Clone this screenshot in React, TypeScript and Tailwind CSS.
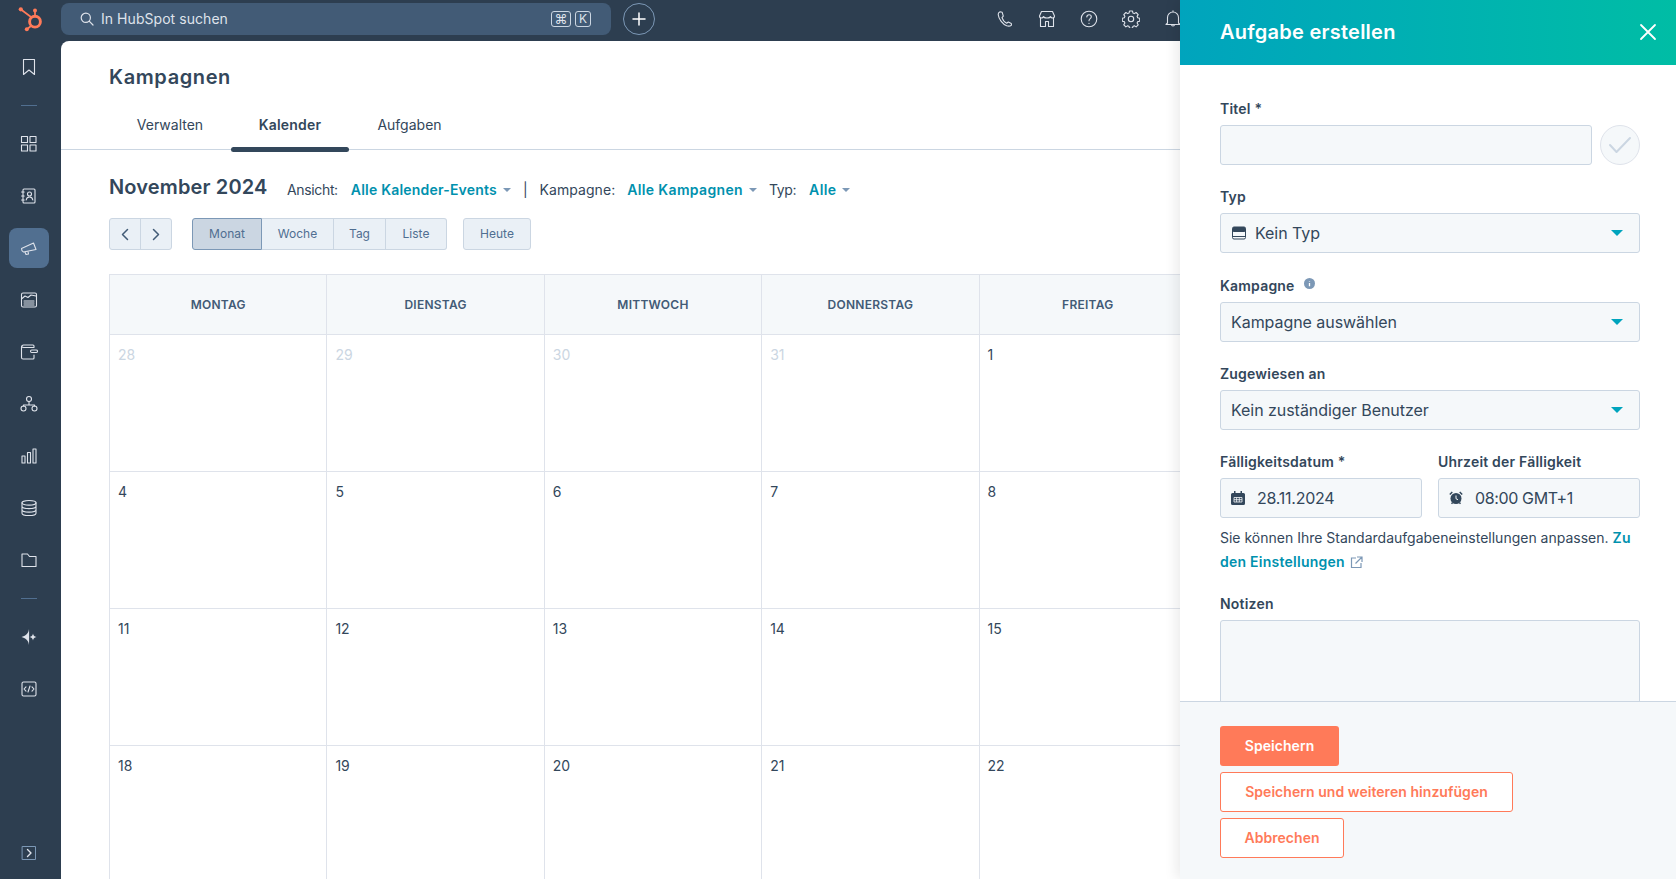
import React from "react";

type IconProps = { w: number; h: number; vb?: string; className?: string; sw?: number; children: React.ReactNode };
function Ic({ w, h, vb, className, sw = 1.1, children }: IconProps) {
  return (
    <svg width={w} height={h} viewBox={vb ?? `0 0 ${w} ${h}`} fill="none" stroke="currentColor" strokeWidth={sw} strokeLinecap="round" strokeLinejoin="round" className={className}>
      {children}
    </svg>
  );
}

const Logo = () => (
  <svg width="61" height="41" viewBox="0 0 61 41" fill="none" className="shrink-0">
    <circle cx="35" cy="21.7" r="5.4" stroke="#ff7a59" strokeWidth="2.9" />
    <path d="M35 16V10.5M21 9.5L31 17M31 26L26.5 29.5" stroke="#ff7a59" strokeWidth="1.7" />
    <circle cx="35" cy="10.5" r="2" fill="#ff7a59" />
    <circle cx="20.8" cy="9.3" r="2.1" fill="#ff7a59" />
    <circle cx="26.8" cy="29.2" r="2" fill="#ff7a59" />
  </svg>
);

const side = {
  bookmark: <Ic w={18} h={18}><path d="M3.5 1.5h11v15l-5.5-4.5-5.5 4.5z" /></Ic>,
  grid: (
    <Ic w={18} h={18}>
      <rect x="1.5" y="1.5" width="6" height="6" /><rect x="10" y="1.5" width="6" height="6" />
      <rect x="1.5" y="10" width="6" height="6" /><rect x="10" y="10" width="6" height="6" />
    </Ic>
  ),
  contacts: (
    <Ic w={18} h={18}>
      <rect x="3" y="2" width="12" height="14" rx="1" />
      <circle cx="9.5" cy="7" r="2" />
      <path d="M6.2 13c.3-2 1.6-3 3.3-3s3 1 3.3 3M1.6 5h2.6M1.6 9h2.6M1.6 13h2.6" />
    </Ic>
  ),
  megaphone: (
    <Ic w={18} h={18}>
      <path d="M1.500 9.500l12-5.500 2.500 6.500-12.500 2.500c-1.500-.5-2-2.500-2-3.500zM5 13l1 2.500 2.500-.5-.5-2.700" />
    </Ic>
  ),
  reports: (
    <Ic w={18} h={18}>
      <rect x="1.500" y="2" width="15" height="14" rx="1.500" />
      <path d="M2 7.500l3-2.500 3 1.500 3-2.500 5 1M4 10h10M4 12h10M4 14h10" />
    </Ic>
  ),
  wallet: (
    <Ic w={18} h={18}>
      <path d="M14 4V3a1 1 0 0 0-1-1H3.500A2 2 0 0 0 1.500 4v10.500a1.500 1.500 0 0 0 1.500 1.500h10a1 1 0 0 0 1-1v-3M1.800 3.500c.3 1 1 1 2 1H14" />
      <rect x="10.500" y="7" width="7" height="2.500" rx="1.200" />
    </Ic>
  ),
  network: (
    <Ic w={18} h={18}>
      <circle cx="9" cy="4" r="2.500" /><circle cx="3.500" cy="13.500" r="2.500" /><circle cx="14.500" cy="13.500" r="2.500" />
      <path d="M9 6.500V10M3.500 11V10h11v1" />
    </Ic>
  ),
  bars: (
    <Ic w={18} h={18}>
      <rect x="2" y="9" width="3" height="7" /><rect x="7.500" y="5.500" width="3" height="10.500" /><rect x="13" y="2" width="3" height="14" />
    </Ic>
  ),
  database: (
    <Ic w={18} h={18}>
      <ellipse cx="9" cy="3.800" rx="7" ry="2.300" />
      <path d="M2 3.800v10.400c0 1.300 3.100 2.300 7 2.300s7-1 7-2.300V3.800M2 7.300c0 1.300 3.100 2.300 7 2.300s7-1 7-2.300M2 10.800c0 1.300 3.100 2.300 7 2.300s7-1 7-2.300" />
    </Ic>
  ),
  folder: <Ic w={18} h={18}><path d="M2 3h5.500l2 2.500H16v10H2z" /></Ic>,
  sparkle: (
    <svg width="18" height="18" viewBox="0 0 18 18" fill="#dfe3eb">
      <path d="M9 1c.2 4 .2 12 0 16-.5-3.500-1.500-6-7.500-8 6-2 7-4.500 7.500-8z" />
      <path d="M13 5.500c.4 2 1 3 3.500 3.500-2.500.5-3.100 1.500-3.500 3.500-.4-2-1-3-3.500-3.500 2.500-.5 3.100-1.500 3.500-3.500z" />
    </svg>
  ),
  code: (
    <Ic w={18} h={18}>
      <rect x="2" y="2" width="14" height="14" rx="1.500" />
      <path d="M6 6.800L4 9l2 2.200M12 6.800L14 9l-2 2.200M10 6l-2 6" />
    </Ic>
  ),
};

const SideItem = ({ children, active }: { children: React.ReactNode; active?: boolean }) => (
  <div className="h-[52px] w-full flex items-center justify-center shrink-0 text-[#dfe3eb]">
    {active ? <div className="w-10 h-10 rounded-lg bg-[#516f90] flex items-center justify-center">{children}</div> : children}
  </div>
);

const SideDash = () => (
  <div className="h-[25px] flex items-center shrink-0">
    <div className="w-4 h-px bg-[#516f90]" />
  </div>
);

const Sidebar = () => (
  <aside className="w-[61px] shrink-0 pr-[3px] flex flex-col items-center">
    <SideItem>{side.bookmark}</SideItem>
    <SideDash />
    <SideItem>{side.grid}</SideItem>
    <SideItem>{side.contacts}</SideItem>
    <SideItem active>{side.megaphone}</SideItem>
    <SideItem>{side.reports}</SideItem>
    <SideItem>{side.wallet}</SideItem>
    <SideItem>{side.network}</SideItem>
    <SideItem>{side.bars}</SideItem>
    <SideItem>{side.database}</SideItem>
    <SideItem>{side.folder}</SideItem>
    <SideDash />
    <SideItem>{side.sparkle}</SideItem>
    <SideItem>{side.code}</SideItem>
    <div className="mt-auto h-[52px] flex items-center justify-center text-[#7c98b6]">
      <Ic w={16} h={16} sw={1}>
        <rect x="1.500" y="1.500" width="13" height="13" />
        <path d="M6.500 4.500L10 8l-3.500 3.500" stroke="#dfe3eb" strokeWidth="1.400" />
      </Ic>
    </div>
  </aside>
);

const TopIcons = () => (
  <div className="ml-auto h-[38px] flex items-center gap-[24px] text-[#dfe3eb] pr-[494px]">
    <Ic w={18} h={18} className="ml-[2px]"><path d="M4 1.800c-1.300.5-2 1.500-1.800 3 .6 4.500 4.500 9.500 8.500 11 1.800.6 3.500.5 4.800-.7l-.2-1.600-3-1.500-1.600 1.200c-2-.8-3.800-3.100-4.700-5.600l1.300-1.500-1.100-3.800z" /></Ic>
    <Ic w={18} h={18}><path d="M3.500 1.500h11l2 4.500c0 1.200-1 2-2 2s-1.800-.8-2-1.500c-.2.700-1.500 1.500-3.500 1.500s-3.300-.8-3.500-1.500c-.2.700-1 1.500-2 1.500s-2-.8-2-2zM2.500 8v8.500h5v-5h3v5h5V8" /></Ic>
    <Ic w={18} h={18}>
      <circle cx="9" cy="9" r="7.800" />
      <path d="M6.800 6.900c.1-1.300 1-2.100 2.300-2.100s2.200.8 2.200 2c0 1.900-2.300 1.800-2.300 3.900" />
      <path d="M9 13.200v.2" />
    </Ic>
    <Ic w={18} h={18}>
      <path d="M7.500 1h3l.4 2 1.400.6 1.800-1.100 2.100 2.100-1.100 1.800.6 1.400 2 .4v3l-2 .4-.6 1.400 1.100 1.800-2.100 2.100-1.800-1.100-1.400.6-.4 2h-3l-.4-2-1.400-.6-1.800 1.100-2.100-2.100 1.100-1.800-.6-1.400-2-.4v-3l2-.4.6-1.400-1.100-1.800 2.100-2.100 1.800 1.100 1.400-.6z" />
      <circle cx="9" cy="9" r="2.700" />
    </Ic>
    <Ic w={18} h={18}>
      <path d="M3.500 13V7.500a5.500 5.500 0 0 1 11 0V13l1.500 1.500H2zM9 2V.8M7.500 14.500c0 2 3 2 3 0" />
    </Ic>
  </div>
);

const TopBar = () => (
  <header className="h-[41px] shrink-0 flex items-start">
    <Logo />
    <div className="mt-[3px] w-[550px] h-8 rounded-lg bg-[#425b76] flex items-center pl-[19px] pr-5 text-[#dfe3eb]">
      <Ic w={14} h={14} sw={1.200}>
        <circle cx="5.800" cy="5.800" r="4.600" />
        <path d="M9.200 9.200l3.800 3.800" />
      </Ic>
      <span className="ml-[7px] pb-px text-[14px] tracking-[0.05px] text-[#dfe3eb]">In HubSpot suchen</span>
      <div className="ml-auto flex items-center gap-[4px]">
        <span className="w-5 h-4 rounded-[3px] border border-[#cbd6e2] flex items-center justify-center text-[13px] leading-none">⌘</span>
        <span className="w-4 h-4 rounded-[3px] border border-[#cbd6e2] flex items-center justify-center text-[12px] leading-none">K</span>
      </div>
    </div>
    <div className="mt-[3px] ml-3 w-8 h-8 rounded-full border border-[#7c98b6] flex items-center justify-center text-white">
      <Ic w={14} h={14} sw={1.500}><path d="M7 1v12M1 7h12" /></Ic>
    </div>
    <TopIcons />
  </header>
);

const Caret = () => <span className="ml-[6px] inline-block w-0 h-0 border-x-[4px] border-x-transparent border-t-[4px] border-t-[#7c98b6]" />;

const Filter = ({ label, value, cls, labelCls, valueCls }: { label: string; value: string; cls: string; labelCls: string; valueCls: string }) => (
  <div className={`flex items-center text-[14px] ${cls}`}>
    <span className={`text-[#33475b] ${labelCls}`}>{label}</span>
    <span className={`ml-[13px] font-semibold text-[#0091ae] ${valueCls}`}>{value}</span>
    <Caret />
  </div>
);

const segBase = "h-full flex items-center justify-center text-[12px] text-[#506e91] bg-[#eaf0f6] border-[#cbd6e2]";

const Toolbar = () => (
  <div className="mt-[15px] ml-[48px] h-8 flex items-center">
    <div className="flex h-full w-[63px] rounded-[3px] border border-[#cbd6e2] bg-[#eaf0f6] text-[#425b76]">
      <div className="w-1/2 flex items-center justify-center border-r border-[#cbd6e2]">
        <Ic w={10} h={14} sw={1.500}><path d="M7.500 2.500L2.500 7.500l5 5" /></Ic>
      </div>
      <div className="w-1/2 flex items-center justify-center">
        <Ic w={10} h={14} sw={1.500}><path d="M2.500 2.500l5 5-5 5" /></Ic>
      </div>
    </div>
    <div className="ml-5 flex h-full">
      <div className={`${segBase} !bg-[#cbd6e2] w-[70px] border !border-[#7c98b6] rounded-l-[3px]`}>Monat</div>
      <div className={`${segBase} w-[72px] border-y border-r`}>Woche</div>
      <div className={`${segBase} w-[52px] border-y border-r`}>Tag</div>
      <div className={`${segBase} w-[61px] border-y border-r rounded-r-[3px]`}>Liste</div>
    </div>
    <div className={`${segBase} ml-4 w-[68px] border rounded-[3px]`}>Heute</div>
  </div>
);

const days = ["MONTAG", "DIENSTAG", "MITTWOCH", "DONNERSTAG", "FREITAG"];
const rows: { n: number; muted?: boolean }[][] = [
  [{ n: 28, muted: true }, { n: 29, muted: true }, { n: 30, muted: true }, { n: 31, muted: true }, { n: 1 }],
  [{ n: 4 }, { n: 5 }, { n: 6 }, { n: 7 }, { n: 8 }],
  [{ n: 11 }, { n: 12 }, { n: 13 }, { n: 14 }, { n: 15 }],
  [{ n: 18 }, { n: 19 }, { n: 20 }, { n: 21 }, { n: 22 }],
];

const Calendar = () => (
  <div className="mt-6 ml-[48px] w-[1088px] grid grid-cols-[repeat(5,217.4px)] border-t border-[#dfe3eb]">
    {days.map((d) => (
      <div key={d} className="h-[60px] border-l border-b border-[#dfe3eb] bg-[#f5f8fa] flex items-center justify-center text-[12px] font-semibold text-[#425b76] tracking-[0.25px]">
        {d}
      </div>
    ))}
    {rows.flat().map((c, i) => (
      <div key={i} className={`h-[137px] border-l border-b border-[#dfe3eb] pl-2 pt-[10px] text-[14px] leading-5 ${c.muted ? "text-[#cbd6e2]" : "text-[#33475b]"}`}>
        {c.n}
      </div>
    ))}
  </div>
);

const Main = () => (
  <main className="flex-1 min-w-0 rounded-tl-lg bg-white overflow-hidden">
    <h1 className="pt-[22px] pl-[48px] text-[20px] leading-7 font-semibold text-[#33475b] tracking-[0.6px]">Kampagnen</h1>
    <nav className="mt-[9px] h-[50px] pl-[48px] flex border-b border-[#cbd6e2] text-[14px] text-[#33475b]">
      <div className="w-[122px] flex items-center justify-center">Verwalten</div>
      <div className="relative w-[118px] flex items-center justify-center font-semibold tracking-[0.2px]">
        Kalender
        <div className="absolute left-0 right-0 bottom-[-3px] h-[5px] rounded-[3px] bg-[#33475b]" />
      </div>
      <div className="w-[121px] flex items-center justify-center">Aufgaben</div>
    </nav>
    <div className="mt-[21px] ml-[48px] h-8 flex items-center whitespace-nowrap">
      <h2 className="w-[178px] text-[20px] font-semibold text-[#33475b] tracking-[0.15px]">November 2024</h2>
      <Filter label="Ansicht:" value="Alle Kalender-Events" cls="mt-[5px]" labelCls="tracking-[-0.35px]" valueCls="tracking-[0.2px]" />
      <span className="ml-3 mt-[5px] text-[14px] text-[#33475b]">|</span>
      <Filter label="Kampagne:" value="Alle Kampagnen" cls="ml-3 mt-[5px]" labelCls="tracking-[0.06px] -mr-px" valueCls="tracking-[0.35px]" />
      <Filter label="Typ:" value="Alle" cls="ml-3 mt-[5px]" labelCls="tracking-[-0.4px]" valueCls="tracking-[0.35px]" />
    </div>
    <Toolbar />
    <Calendar />
  </main>
);

const Label = ({ children }: { children: React.ReactNode }) => (
  <div className="h-5 mb-[6px] pb-px flex items-center text-[14px] font-semibold text-[#33475b] tracking-[0.2px]">{children}</div>
);

const boxCls = "h-10 rounded-[3px] border border-[#cbd6e2] bg-[#f5f8fa] flex items-center text-[16px] text-[#33475b]";

const Select = ({ icon, text }: { icon?: React.ReactNode; text: string }) => (
  <div className={`${boxCls} pl-[10px] pr-4 tracking-[-0.05px]`}>
    {icon}
    <span>{text}</span>
    <span className="ml-auto w-0 h-0 border-x-[6px] border-x-transparent border-t-[6px] border-t-[#00a4bd]" />
  </div>
);

const Panel = () => (
  <section className="absolute top-0 right-0 bottom-0 w-[496px] flex flex-col bg-white shadow-[-4px_0_12px_rgba(0,0,0,0.08)]">
    <header className="h-[65px] shrink-0 bg-linear-to-r from-[#00a4bd] to-[#00bda5] pl-10 pr-[19px] pb-[2px] flex items-center justify-between">
      <h2 className="text-[20px] font-semibold text-white tracking-[0.25px]">Aufgabe erstellen</h2>
      <Ic w={18} h={18} sw={1.800} className="text-white"><path d="M2 2l14 14M16 2L2 16" /></Ic>
    </header>
    <div className="flex-1 min-h-0 overflow-hidden pl-10 pr-9 pt-[34px] flex flex-col">
      <div>
        <Label>Titel *</Label>
        <div className="flex items-center gap-2">
          <div className={`${boxCls} flex-1`} />
          <div className="w-10 h-10 rounded-full border border-[#dfe3eb] bg-[#f5f8fa] flex items-center justify-center text-[#cbd6e2]">
            <Ic w={24} h={24} sw={2}><path d="M2 12l6.500 7L22 5" /></Ic>
          </div>
        </div>
      </div>
      <div className="mt-[22.250px]">
        <Label>Typ</Label>
        <Select
          text="Kein Typ"
          icon={
            <svg width="14" height="14" viewBox="0 0 14 14" className="mr-[9px] ml-[1px]">
              <rect x="0.500" y="1" width="13" height="12" rx="1.500" fill="none" stroke="#33475b" />
              <rect x="0.500" y="1" width="13" height="5" rx="1.500" fill="#33475b" />
              <path d="M0.500 10.500h13" stroke="#33475b" />
            </svg>
          }
        />
      </div>
      <div className="mt-[22.250px]">
        <Label>
          Kampagne
          <svg width="11" height="11" viewBox="0 0 11 11" className="ml-[9px] mb-[3px]">
            <circle cx="5.500" cy="5.500" r="5.500" fill="#7c98b6" />
            <path d="M5.500 3v.6M5.500 5v3.200" stroke="#fff" strokeWidth="1.300" />
          </svg>
        </Label>
        <Select text="Kampagne auswählen" />
      </div>
      <div className="mt-[22.250px]">
        <Label>Zugewiesen an</Label>
        <Select text="Kein zuständiger Benutzer" />
      </div>
      <div className="mt-[22.250px] grid grid-cols-2 gap-4">
        <div>
          <Label>Fälligkeitsdatum *</Label>
          <div className={`${boxCls} pl-[10px] tracking-[-0.24px]`}>
            <svg width="14" height="14" viewBox="0 0 14 14" className="mr-[12px]">
              <path d="M3 0h1.500v2h5V0H11v2h1.500A1.500 1.500 0 0 1 14 3.500v9a1.500 1.500 0 0 1-1.500 1.500h-11A1.500 1.500 0 0 1 0 12.500v-9A1.500 1.500 0 0 1 1.500 2H3z" fill="#33475b" />
              <path d="M3 6.500h8v4.500H3zM5.600 6.500v4.500M8.300 6.500v4.500M3 8.700h8" stroke="#f5f8fa" strokeWidth="0.800" fill="none" />
            </svg>
            <span>28.11.2024</span>
          </div>
        </div>
        <div>
          <Label>Uhrzeit der Fälligkeit</Label>
          <div className={`${boxCls} pl-[10px] tracking-[-0.37px]`}>
            <svg width="14" height="14" viewBox="0 0 14 14" className="mr-[12px]">
              <circle cx="7" cy="7.500" r="5.500" fill="#33475b" />
              <path d="M7 4.500v3.200l2 1" stroke="#f5f8fa" strokeWidth="1" fill="none" />
              <path d="M0.800 3.500L3.300 1M13.200 3.500L10.700 1M2.500 12.800l1-1M11.500 12.800l-1-1" stroke="#33475b" strokeWidth="1.500" />
            </svg>
            <span>08:00 GMT+1</span>
          </div>
        </div>
      </div>
      <p className="mt-2 text-[14px] leading-6 text-[#33475b]">
        <span>Sie können Ihre Standardaufgabeneinstellungen anpassen.</span> <span className="font-semibold text-[#0091ae] tracking-[0.25px]">Zu</span>{" "}
        <span className="font-semibold text-[#0091ae] tracking-[0.25px]">den Einstellungen</span>
        <svg width="13" height="13" viewBox="0 0 13 13" fill="none" stroke="#7c98b6" strokeWidth="1.200" className="inline ml-[5px] mb-[2px]">
          <path d="M6 2H1.500v9.500H11V7M7 1h5v5M12 1L5.500 7.500" />
        </svg>
      </p>
      <div className="mt-5">
        <Label>Notizen</Label>
        <div className="h-[120px] mt-px rounded-[3px] border border-[#cbd6e2] bg-[#f5f8fa]" />
      </div>
    </div>
    <footer className="h-[178px] shrink-0 border-t border-[#cbd6e2] bg-[#f5f8fa] pl-10 pt-6 flex flex-col items-start gap-[6px] text-[14px] font-semibold tracking-[0.05px] text-[#ff7a59]">
      <div className="w-[119px] h-10 pb-px rounded-[3px] bg-[#ff7a59] text-white flex items-center justify-center">Speichern</div>
      <div className="w-[293px] h-10 pb-px rounded-[3px] border border-[#ff7a59] bg-white flex items-center justify-center">Speichern und weiteren hinzufügen</div>
      <div className="w-[124px] h-10 pb-px rounded-[3px] border border-[#ff7a59] bg-white flex items-center justify-center">Abbrechen</div>
    </footer>
  </section>
);

export default function App() {
  return (
    <div className="relative h-screen w-full overflow-hidden bg-[#2d3e50] flex flex-col [font-family:Inter,'Noto_Sans',sans-serif]">
      <TopBar />
      <div className="flex-1 min-h-0 flex">
        <Sidebar />
        <Main />
      </div>
      <Panel />
    </div>
  );
}
